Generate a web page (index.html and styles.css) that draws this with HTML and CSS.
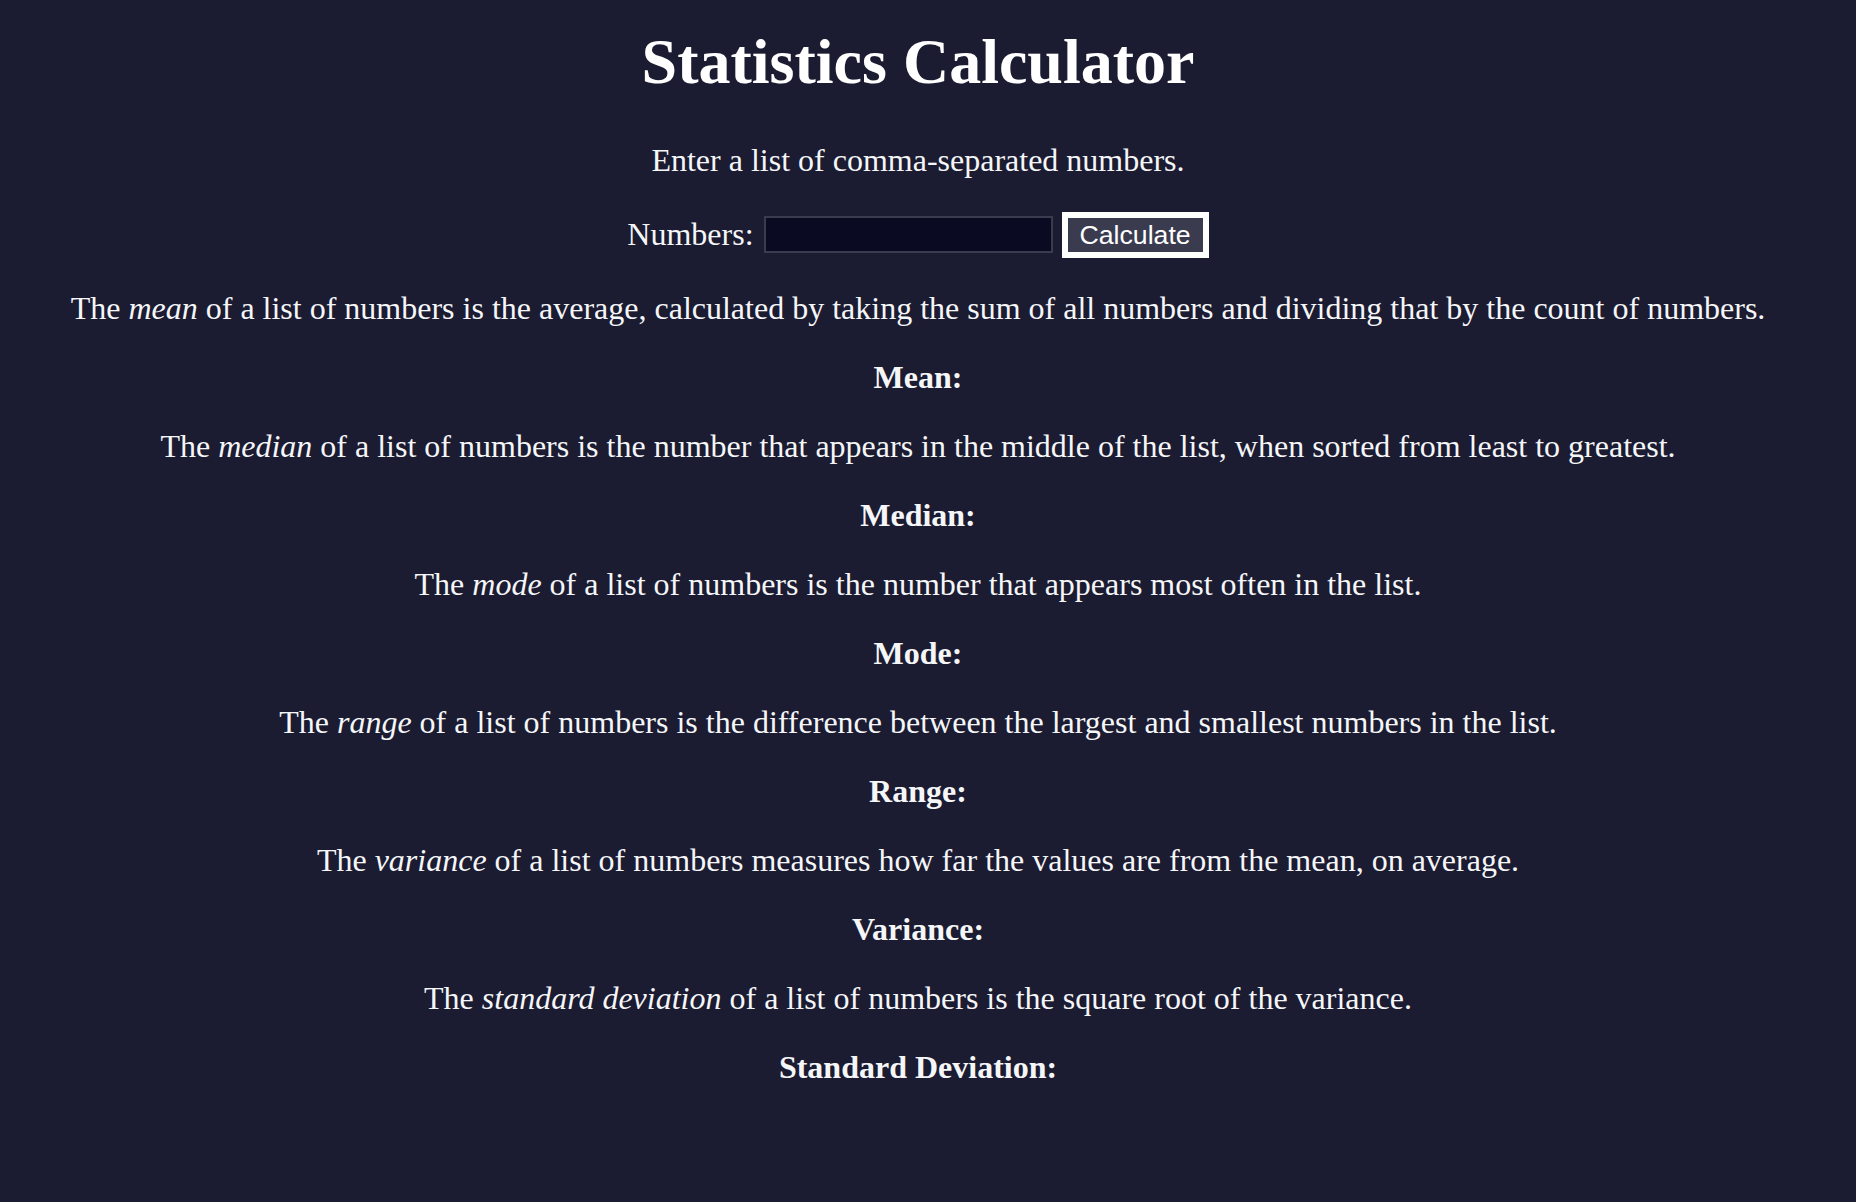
FILE: index.html
```html
<!DOCTYPE html>
<html lang="en">
<head>
<meta charset="utf-8">
<title>Statistics Calculator</title>
<link rel="stylesheet" href="styles.css">
</head>
<body>
<main class="page">
  <h1 class="title">Statistics Calculator</h1>
  <p class="text">Enter a list of comma-separated numbers.</p>
  <form class="form-row"><label class="label" for="numbers">Numbers:</label><input class="input" id="numbers" type="text"><button class="btn" type="button">Calculate</button></form>
  <p class="text">The <em>mean</em> of a list of numbers is the average, calculated by taking the sum of all numbers and dividing that by the count of numbers.</p>
  <p class="text result">Mean:</p>
  <p class="text">The <em>median</em> of a list of numbers is the number that appears in the middle of the list, when sorted from least to greatest.</p>
  <p class="text result">Median:</p>
  <p class="text">The <em>mode</em> of a list of numbers is the number that appears most often in the list.</p>
  <p class="text result">Mode:</p>
  <p class="text">The <em>range</em> of a list of numbers is the difference between the largest and smallest numbers in the list.</p>
  <p class="text result">Range:</p>
  <p class="text">The <em>variance</em> of a list of numbers measures how far the values are from the mean, on average.</p>
  <p class="text result">Variance:</p>
  <p class="text">The <em>standard deviation</em> of a list of numbers is the square root of the variance.</p>
  <p class="text result">Standard Deviation:</p>
</main>
</body>
</html>
```

FILE: styles.css
```css
html, body {
  margin: 0;
  background: #1b1b32;
}
body {
  color: #f5f6f7;
  font-family: "Liberation Serif", "Times New Roman", serif;
  font-size: 32px;
}
.page {
  padding: 25px 36px 0 16px;
  text-align: center;
}
.title {
  font-size: 64px;
  font-weight: bold;
  margin: 0 0 43px;
  color: #ffffff;
}
.text {
  margin: 32px 0;
}
.result {
  font-weight: bold;
}
.form-row {
  margin: 32px 0;
  display: flex;
  justify-content: center;
  align-items: center;
  min-height: 47px;
}
.label {
  font-size: 32px;
  line-height: 37px;
  margin-right: 10px;
}
.input {
  box-sizing: border-box;
  width: 289px;
  height: 37px;
  margin: 0 9px 0 0;
  padding: 2px 4px;
  background: #0a0a23;
  border: 2px solid #3b3b4f;
  color: #ffffff;
  font-family: "Liberation Sans", Arial, sans-serif;
  font-size: 26px;
}
.btn {
  box-sizing: border-box;
  height: 46px;
  margin: 0;
  padding: 2px 12px;
  background: #3b3b4f;
  border: 6px solid #ffffff;
  color: #ffffff;
  font-family: "Liberation Sans", Arial, sans-serif;
  font-size: 26.67px;
  line-height: 30px;
}
```
